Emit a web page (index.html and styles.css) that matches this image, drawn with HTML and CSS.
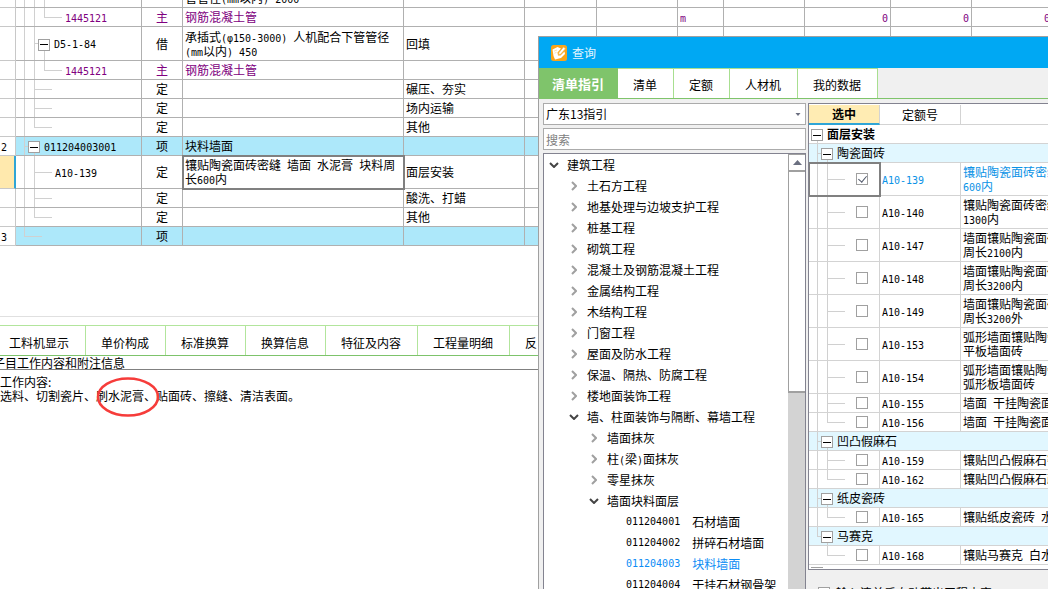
FILE: index.html
```html
<!DOCTYPE html>
<html lang="zh-CN">
<head>
<meta charset="utf-8">
<title>查询</title>
<link rel="stylesheet" href="styles.css">
</head>
<body>
<main class="app">
  <section class="estimate">
    <table class="grid">
      <colgroup><col class="w-idx"><col class="w-code"><col class="w-kind"><col class="w-name"><col class="w-work"><col class="w-72"><col class="w-81"><col class="w-46"><col class="w-81"><col class="w-86"><col class="w-81"><col class="w-81"></colgroup>
      <tbody>
        <tr class="tall"><td></td><td class="tree a b c-top"></td><td></td><td>承插式<span class="num">(φ150-3000)&nbsp;</span>人机配合下<br>管管径<span class="num">(mm</span>以内<span class="num">)&nbsp;2000</span></td><td></td><td></td><td></td><td></td><td></td><td></td><td></td><td></td></tr>
        <tr class="material"><td></td><td class="tree a b c-half h3 in3"><span class="num">1445121</span></td><td class="mid">主</td><td>钢筋混凝土管</td><td></td><td></td><td></td><td><span class="num">m</span></td><td></td><td class="end"><span class="num">0</span></td><td class="end"><span class="num">0</span></td><td class="end"><span class="num">0</span></td></tr>
        <tr class="tall"><td></td><td class="tree a b c-low s2 in-box2"><button class="fold" aria-label="折叠"></button><span class="num">D5-1-84</span></td><td class="mid">借</td><td>承插式<span class="num">(φ150-3000)&nbsp;</span>人机配合下管管径<br><span class="num">(mm</span>以内<span class="num">)&nbsp;450</span></td><td>回填</td><td></td><td></td><td></td><td></td><td></td><td></td><td></td></tr>
        <tr class="material"><td></td><td class="tree a b c-half h3 in3"><span class="num">1445121</span></td><td class="mid">主</td><td>钢筋混凝土管</td><td></td><td></td><td></td><td></td><td></td><td></td><td></td><td></td></tr>
        <tr><td></td><td class="tree a b h2"></td><td class="mid">定</td><td></td><td>碾压、夯实</td><td></td><td></td><td></td><td></td><td></td><td></td><td></td></tr>
        <tr><td></td><td class="tree a b h2"></td><td class="mid">定</td><td></td><td>场内运输</td><td></td><td></td><td></td><td></td><td></td><td></td><td></td></tr>
        <tr><td></td><td class="tree a b-half h2"></td><td class="mid">定</td><td></td><td>其他</td><td></td><td></td><td></td><td></td><td></td><td></td><td></td></tr>
        <tr class="item"><td><span class="num">2</span></td><td class="tree a b-low s1 in-box1"><button class="fold" aria-label="折叠"></button><span class="num">011204003001</span></td><td class="mid">项</td><td>块料墙面</td><td></td><td></td><td></td><td></td><td></td><td></td><td></td><td></td></tr>
        <tr class="double"><td class="marker"></td><td class="tree a b h2 in2"><span class="num">A10-139</span></td><td class="mid">定</td><td class="focus">镶贴陶瓷面砖密缝<span class="num">&nbsp;</span>墙面<span class="num">&nbsp;</span>水泥膏<span class="num">&nbsp;</span>块料周<br>长<span class="num">600</span>内</td><td>面层安装</td><td></td><td></td><td></td><td></td><td></td><td></td><td></td></tr>
        <tr><td></td><td class="tree a b h2"></td><td class="mid">定</td><td></td><td>酸洗、打蜡</td><td></td><td></td><td></td><td></td><td></td><td></td><td></td></tr>
        <tr><td></td><td class="tree a b-half h2"></td><td class="mid">定</td><td></td><td>其他</td><td></td><td></td><td></td><td></td><td></td><td></td><td></td></tr>
        <tr class="item"><td><span class="num">3</span></td><td class="tree a-half h1"></td><td class="mid">项</td><td></td><td></td><td></td><td></td><td></td><td></td><td></td><td></td><td></td></tr>
      </tbody>
    </table>
  </section>
  <section class="detail">
    <nav class="detail-tabs">
      <button>工料机显示</button><button>单价构成</button><button>标准换算</button><button>换算信息</button><button>特征及内容</button><button>工程量明细</button><button>反</button>
    </nav>
    <h2 class="detail-title">子目工作内容和附注信息</h2>
    <div class="note">
      <p>工作内容:</p>
      <p>选料、切割瓷片、<span class="marked">刷水泥膏、<svg class="ring" viewBox="0 0 64 42" aria-hidden="true"><ellipse cx="32" cy="21" rx="30" ry="18.5" fill="none" stroke="#f63c3a" stroke-width="2.5"/></svg></span>贴面砖、擦缝、清洁表面。</p>
    </div>
  </section>
</main>

<section class="dialog" role="dialog" aria-labelledby="dlg-title">
  <header class="titlebar">
    <svg class="logo" viewBox="0 0 16 16" aria-hidden="true"><rect width="16" height="16" rx="2.500" fill="#f9a51a"/><path d="M1.500 4.500 6.500 2 10 3.500 6.500 7.500 7 10.500 9.500 10.500 13.500 6.500 14 9 10 13 4 14.500 2.500 11z" fill="#fff"/><path d="M7.500 9.500 8 7.500 12.500 2 14.500 3.800 9.500 9.300z" fill="#fff" stroke="#f3b54a" stroke-width=".7"/><path d="M3 6.200 6 5M3.500 8.200 5.500 7.400" stroke="#fbd694" stroke-width=".8"/></svg>
    <h1 id="dlg-title">查询</h1>
  </header>
  <nav class="tabs">
    <button class="active">清单指引</button><button>清单</button><button>定额</button><button>人材机</button><button>我的数据</button>
  </nav>
  <div class="panes">
    <div class="guide">
      <div class="combo"><select aria-label="指引"><option>广东13指引</option></select><svg viewBox="0 0 5 3" aria-hidden="true"><path d="M0 0h5L2.500 3z" fill="#6b6f80"/></svg></div>
      <input class="search" type="text" placeholder="搜索" aria-label="搜索">
      <div class="outline">
        <ul class="nodes">
          <li class="l1"><svg class="open" viewBox="0 0 10 6"><path d="M1 1l4 4 4-4"/></svg>建筑工程</li>
          <li class="l2"><svg viewBox="0 0 6 10"><path d="M1 1l4 4-4 4"/></svg>土石方工程</li>
          <li class="l2"><svg viewBox="0 0 6 10"><path d="M1 1l4 4-4 4"/></svg>地基处理与边坡支护工程</li>
          <li class="l2"><svg viewBox="0 0 6 10"><path d="M1 1l4 4-4 4"/></svg>桩基工程</li>
          <li class="l2"><svg viewBox="0 0 6 10"><path d="M1 1l4 4-4 4"/></svg>砌筑工程</li>
          <li class="l2"><svg viewBox="0 0 6 10"><path d="M1 1l4 4-4 4"/></svg>混凝土及钢筋混凝土工程</li>
          <li class="l2"><svg viewBox="0 0 6 10"><path d="M1 1l4 4-4 4"/></svg>金属结构工程</li>
          <li class="l2"><svg viewBox="0 0 6 10"><path d="M1 1l4 4-4 4"/></svg>木结构工程</li>
          <li class="l2"><svg viewBox="0 0 6 10"><path d="M1 1l4 4-4 4"/></svg>门窗工程</li>
          <li class="l2"><svg viewBox="0 0 6 10"><path d="M1 1l4 4-4 4"/></svg>屋面及防水工程</li>
          <li class="l2"><svg viewBox="0 0 6 10"><path d="M1 1l4 4-4 4"/></svg>保温、隔热、防腐工程</li>
          <li class="l2"><svg viewBox="0 0 6 10"><path d="M1 1l4 4-4 4"/></svg>楼地面装饰工程</li>
          <li class="l2"><svg class="open" viewBox="0 0 10 6"><path d="M1 1l4 4 4-4"/></svg>墙、柱面装饰与隔断、幕墙工程</li>
          <li class="l3"><svg viewBox="0 0 6 10"><path d="M1 1l4 4-4 4"/></svg>墙面抹灰</li>
          <li class="l3"><svg viewBox="0 0 6 10"><path d="M1 1l4 4-4 4"/></svg><span>柱<span class="num">(</span>梁<span class="num">)</span>面抹灰</span></li>
          <li class="l3"><svg viewBox="0 0 6 10"><path d="M1 1l4 4-4 4"/></svg>零星抹灰</li>
          <li class="l3"><svg class="open" viewBox="0 0 10 6"><path d="M1 1l4 4 4-4"/></svg>墙面块料面层</li>
          <li class="leaf"><span class="num">011204001</span>石材墙面</li>
          <li class="leaf"><span class="num">011204002</span>拼碎石材墙面</li>
          <li class="leaf current"><span class="num">011204003</span>块料墙面</li>
          <li class="leaf"><span class="num">011204004</span>干挂石材钢骨架</li>
        </ul>
        <div class="scroll">
          <button class="up" aria-label="向上滚动"><svg viewBox="0 0 9 5"><path d="M0 5h9L4.500 0z" fill="#6b6f80"/></svg></button>
          <div class="thumb"></div>
        </div>
      </div>
    </div>
    <div class="quota">
      <div class="quota-box">
        <table class="grid light">
          <colgroup><col class="w-71"><col class="w-81"><col class="w-rest"></colgroup>
          <thead><tr><th class="picked">选中</th><th>定额号</th><th></th></tr></thead>
          <tbody>
            <tr class="root"><td colspan="3" class="tree a-low in-box0"><button class="fold" aria-label="折叠"></button>面层安装</td></tr>
            <tr class="group"><td colspan="3" class="tree a b-low s1 in-box1"><button class="fold" aria-label="折叠"></button>陶瓷面砖</td></tr>
            <tr class="double chosen"><td class="tree a b h2 tick focus"><input type="checkbox" checked aria-label="A10-139"></td><td><span class="num">A10-139</span></td><td>镶贴陶瓷面砖密缝<br><span class="num">600</span>内</td></tr>
            <tr class="double"><td class="tree a b h2 tick"><input type="checkbox" aria-label="A10-140"></td><td><span class="num">A10-140</span></td><td>镶贴陶瓷面砖密缝<br><span class="num">1300</span>内</td></tr>
            <tr class="double"><td class="tree a b h2 tick"><input type="checkbox" aria-label="A10-147"></td><td><span class="num">A10-147</span></td><td>墙面镶贴陶瓷面砖<br>周长<span class="num">2100</span>内</td></tr>
            <tr class="double"><td class="tree a b h2 tick"><input type="checkbox" aria-label="A10-148"></td><td><span class="num">A10-148</span></td><td>墙面镶贴陶瓷面砖<br>周长<span class="num">3200</span>内</td></tr>
            <tr class="double"><td class="tree a b h2 tick"><input type="checkbox" aria-label="A10-149"></td><td><span class="num">A10-149</span></td><td>墙面镶贴陶瓷面砖<br>周长<span class="num">3200</span>外</td></tr>
            <tr class="double"><td class="tree a b h2 tick"><input type="checkbox" aria-label="A10-153"></td><td><span class="num">A10-153</span></td><td>弧形墙面镶贴陶瓷<br>平板墙面砖</td></tr>
            <tr class="double"><td class="tree a b h2 tick"><input type="checkbox" aria-label="A10-154"></td><td><span class="num">A10-154</span></td><td>弧形墙面镶贴陶瓷<br>弧形板墙面砖</td></tr>
            <tr><td class="tree a b h2 tick"><input type="checkbox" aria-label="A10-155"></td><td><span class="num">A10-155</span></td><td>墙面<span class="num">&nbsp;</span>干挂陶瓷面砖</td></tr>
            <tr><td class="tree a b-half h2 tick"><input type="checkbox" aria-label="A10-156"></td><td><span class="num">A10-156</span></td><td>墙面<span class="num">&nbsp;</span>干挂陶瓷面砖</td></tr>
            <tr class="group"><td colspan="3" class="tree a b-low s1 in-box1"><button class="fold" aria-label="折叠"></button>凹凸假麻石</td></tr>
            <tr><td class="tree a b h2 tick"><input type="checkbox" aria-label="A10-159"></td><td><span class="num">A10-159</span></td><td>镶贴凹凸假麻石密</td></tr>
            <tr><td class="tree a b-half h2 tick"><input type="checkbox" aria-label="A10-162"></td><td><span class="num">A10-162</span></td><td>镶贴凹凸假麻石疏</td></tr>
            <tr class="group"><td colspan="3" class="tree a b-low s1 in-box1"><button class="fold" aria-label="折叠"></button>纸皮瓷砖</td></tr>
            <tr><td class="tree a b-half h2 tick"><input type="checkbox" aria-label="A10-165"></td><td><span class="num">A10-165</span></td><td>镶贴纸皮瓷砖<span class="num">&nbsp;</span>水</td></tr>
            <tr class="group"><td colspan="3" class="tree a-half b-low s1 in-box1"><button class="fold" aria-label="折叠"></button>马赛克</td></tr>
            <tr><td class="tree b-half h2 tick"><input type="checkbox" aria-label="A10-168"></td><td><span class="num">A10-168</span></td><td>镶贴马赛克<span class="num">&nbsp;</span>白水</td></tr>
          </tbody>
        </table>
        <div class="hscroll"></div>
      </div>
      <label class="option"><input type="checkbox">输入清单后自动带出工程内容</label>
    </div>
  </div>
</section>
</body>
</html>
```
FILE: styles.css
```css
* { box-sizing: border-box; }
body, h1, h2, p, ul { margin: 0; padding: 0; }
body {
  font: 12px/14px "Noto Sans CJK SC", sans-serif;
  color: #000;
  background: #fff;
  height: 100vh;
  overflow: hidden;
  position: relative;
}
button, select, input { font: inherit; color: inherit; margin: 0; padding: 0; border: 0; background: none; border-radius: 0; }
svg { display: block; }
.num { font-family: "DejaVu Sans Mono", monospace; font-size: 10px; line-height: 10px; }

/* main window */
.app { display: flex; flex-direction: column; height: 100%; overflow: hidden; }
.estimate { height: 317px; flex: none; overflow: hidden; border-bottom: 1px solid #e0e0e0; }
.estimate .grid { width: 1053px; margin-top: -26px; }

.grid { table-layout: fixed; border-collapse: separate; border-spacing: 0; white-space: nowrap; --rule: #b0b0b0; }
.grid.light { width: 100%; --rule: #d3d3d3; }
.grid tr { height: 19px; }
.grid tr.tall { height: 34px; }
.grid tr.double { height: 33px; }
.grid td, .grid th { padding: 0 0 0 2px; border: 0 solid var(--rule); border-width: 0 1px 1px 0; vertical-align: middle; overflow: hidden; }
.grid.light tr > :last-child { border-right: 0; }
.grid td.mid { text-align: center; padding: 0; }
.grid td.end { text-align: right; padding: 0 2px 0 0; }
.estimate td:first-child { border-color: #c8c8c8; padding-left: 1px; }
.w-idx { width: 16px; }
.w-code { width: 126px; }
.w-kind { width: 41px; }
.w-name { width: 221px; }
.w-work { width: 121px; }
.w-46 { width: 46px; }
.w-71 { width: 71px; }
.w-72 { width: 72px; }
.w-81 { width: 81px; }
.w-86 { width: 86px; }
.material { color: #800080; }
.item td:not(:first-child) { background-color: #ade8fa; }
.estimate td.marker { background: #ffe9ad; border-right: 2px solid #2fa5d6; }
td.focus { outline: 2px solid #808080; outline-offset: -1px; }

/* guide lines of the tree column: three verticals and one horizontal */
.tree {
  --line: linear-gradient(#d0d0d0, #d0d0d0);
  background-image: var(--line), var(--line), var(--line), var(--line);
  background-repeat: no-repeat;
  background-position: 8px var(--a-at, 0), 18px var(--b-at, 0), 28px var(--c-at, 0), var(--h-at, 0) 50%;
  background-size: 1px var(--a, 0), 1px var(--b, 0), 1px var(--c, 0), var(--h, 0) 1px;
}
.a { --a: 100%; }
.a-half { --a: 50%; }
.a-low { --a: 50%; --a-at: 100%; }
.b { --b: 100%; }
.b-half { --b: 50%; }
.b-low { --b: 50%; --b-at: 100%; }
.c-top { --c: 100%; }
.c-half { --c: 50%; }
.c-low { --c: 50%; --c-at: 100%; }
.h1 { --h: 18px; --h-at: 8px; }
.h2 { --h: 18px; --h-at: 18px; }
.h3 { --h: 18px; --h-at: 28px; }
.s1 { --h: 5px; --h-at: 8px; }
.s2 { --h: 5px; --h-at: 18px; }
.grid td.in2 { padding-left: 39px; }
.grid td.in3 { padding-left: 49px; }
.grid td.in-box0 { padding-left: 2px; }
.grid td.in-box1 { padding-left: 12px; }
.grid td.in-box2 { padding-left: 22px; }
.fold {
  display: inline-block;
  width: 12px;
  height: 12px;
  margin-right: 4px;
  vertical-align: middle;
  border: 1px solid #a0a0a0;
  background: linear-gradient(#000, #000) 50% 50% / 8px 1px no-repeat, #fff;
}

/* lower detail pane */
.detail { flex: 1; padding-top: 8px; }
.detail-tabs { display: flex; height: 31px; border-top: 1px solid #b2e59c; border-bottom: 1px solid #7dc36b; }
.detail-tabs button { padding: 4px 16px 0 15px; border-right: 1px solid #b2e59c; }
.detail-tabs button:first-child { padding: 4px 16px 0 9px; }
.detail-tabs button:nth-child(7) { border: 0; padding-right: 0; }
.detail-title { font-size: 12px; font-weight: 400; line-height: 13px; text-indent: -7px; border-bottom: 1px solid #808080; overflow: hidden; }
.note { padding-top: 5px; }
.marked { position: relative; }
.ring { position: absolute; left: 0; top: -11px; width: 64px; height: 42px; }

/* query dialog */
.dialog {
  position: absolute;
  left: 538px;
  top: 36px;
  right: 0;
  bottom: 0;
  display: flex;
  flex-direction: column;
  border: 1px solid #a0a0a0;
  border-width: 1px 0 0 1px;
  background: #f0f0f0;
  overflow: hidden;
}
.titlebar { flex: none; display: flex; align-items: center; gap: 5px; height: 31px; padding-left: 12px; background: #00a8f3; color: #e6f6fe; }
.titlebar h1 { font-size: 12px; font-weight: 400; line-height: 14px; }
.logo { width: 16px; height: 16px; }
.tabs { flex: none; display: flex; height: 31px; border-bottom: 1px solid #7fc46b; }
.tabs button { padding: 2px 16px 0 15px; background: #fff; border-top: 1px solid #a8df90; border-right: 1px solid #a8df90; }
.tabs .active { padding: 1px 14px 0 13px; background: #7fc46b; border-color: #7fc46b; border-right: 0; color: #fff; font-weight: 700; font-size: 13px; }
.panes { flex: 1; min-height: 0; display: flex; gap: 2px; padding: 4px 0 0 4px; }
.guide { flex: none; width: 263px; display: flex; flex-direction: column; gap: 3px; }
.combo { flex: none; position: relative; height: 22px; background: #fff; border: 1px solid #ababab; }
.combo select { appearance: none; width: 100%; height: 100%; padding-left: 2px; }
.combo svg { position: absolute; right: 4px; top: 9px; width: 6px; height: 3px; }
.search { flex: none; height: 22px; padding-left: 2px; background: #fff; border: 1px solid #ababab; }
.search::placeholder { color: #808080; opacity: 1; }
.outline { flex: 1; min-height: 0; display: flex; background: #fff; border: solid #838390; border-width: 1px 1px 0 1px; overflow: hidden; }
.nodes { flex: 1; min-width: 0; list-style: none; white-space: nowrap; overflow: hidden; }
.nodes li { display: flex; align-items: center; gap: 10px; height: 21px; }
.nodes svg { flex: none; width: 6px; height: 10px; fill: none; stroke: #a0a0a0; stroke-width: 2; }
.nodes .open { width: 10px; height: 6px; stroke: #444; }
.nodes .l1 { padding-left: 5px; gap: 8px; }
.nodes .l2 { padding-left: 27px; }
.nodes .l3 { padding-left: 47px; }
.nodes .l2:has(.open) { padding-left: 25px; gap: 8px; }
.nodes .l3:has(.open) { padding-left: 45px; gap: 8px; }
.nodes .leaf { padding-left: 82px; gap: 12px; }
.current { color: #0a8cf5; }
.scroll { flex: none; width: 17px; display: flex; flex-direction: column; background: #d3d3d3; }
.scroll .up { flex: none; height: 18px; display: flex; justify-content: center; align-items: center; background: #fff; border: 1px solid #a0a0a0; border-width: 1px 0 2px 1px; }
.up svg { width: 9px; height: 5px; }
.thumb { height: 221px; background: #fff; border: 1px solid #a0a0a0; border-width: 0 0 2px 1px; }

.quota { flex: 1; min-width: 0; }
.quota-box { border: 1px solid #838390; border-right: 0; padding-top: 1px; background: #fff; overflow: hidden; }
.grid.light th { font-weight: 400; text-align: center; padding: 0; height: 20px; }
.grid.light .picked { font-weight: 700; background: #ffecb3; border-bottom: 2px solid #2fa5d6; }
.root { font-weight: 700; }
.group td { background-color: #e1f7ff; }
.chosen { color: #0a92e6; }
.grid td.tick { padding-left: 47px; }
.tick input, .option input { appearance: none; display: block; width: 12px; height: 12px; border: 1px solid #a0a0a0; background: #fff; }
.tick input:checked::after { content: ""; display: block; width: 4px; height: 7px; margin: 0 0 0 3px; border: solid #50586a; border-width: 0 1px 1px 0; transform: rotate(40deg); }
.hscroll { width: 12px; height: 2px; margin: 2px 0 0 2px; border-top: 1px solid #a0a0a0; }
.option { display: flex; align-items: center; gap: 6px; padding: 16px 0 0 10px; white-space: nowrap; }
```
